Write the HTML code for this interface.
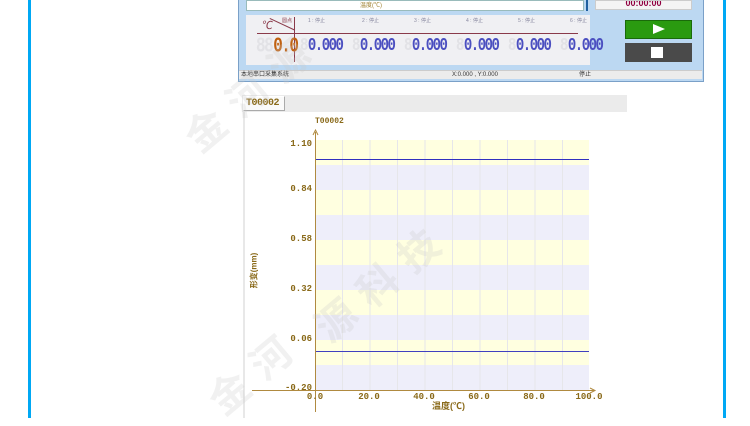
<!DOCTYPE html>
<html><head><meta charset="utf-8"><style>
*{margin:0;padding:0;box-sizing:border-box}
body{width:750px;height:418px;background:#fff;position:relative;overflow:hidden;font-family:"Liberation Sans","Noto Sans CJK SC",sans-serif}
.a{position:absolute}
.lcd{position:absolute;font-family:"Liberation Mono",monospace;font-size:14px;font-weight:bold;color:#4b4fc0;letter-spacing:-1.5px;top:38px;white-space:nowrap;transform:scaleY(1.35);transform-origin:0 50%}
.lcd b{color:#e2e2e6;margin-right:1px}
.hd{position:absolute;top:17px;font-size:5px;color:#8888a0}
.yl{position:absolute;font-family:"Liberation Mono",monospace;font-size:9px;font-weight:bold;color:#8a6a1a;text-align:right;width:40px}
.xl{position:absolute;font-family:"Liberation Mono",monospace;font-size:9px;font-weight:bold;color:#8a6a1a;top:392px;width:40px;text-align:center}
.wm{position:absolute;font-size:40px;color:rgba(200,200,200,0.25);font-weight:bold;transform:rotate(-40deg);white-space:nowrap;letter-spacing:14px}
</style></head><body>
<div class="a" style="left:28px;top:0;width:3px;height:418px;background:#00a8f4"></div>
<div class="a" style="left:723px;top:0;width:3px;height:418px;background:#00a8f4"></div>

<div class="a" style="left:238px;top:0;width:466px;height:82px;background:#bcd8f2;border:1px solid #7aa0c8;border-top:none"></div>
<div class="a" style="left:246px;top:0;width:338px;height:11px;background:#fff;border:1px solid #9bb"></div>
<div class="a" style="left:360px;top:0;font-size:6px;color:#a08030">温度(℃)</div>
<div class="a" style="left:586px;top:0;width:2px;height:11px;background:#2060a0"></div>
<div class="a" style="left:595px;top:0;width:97px;height:10px;background:#f4f4f4;border:1px solid #ccc;font:bold 9px 'Liberation Sans';color:#900040;text-align:center;line-height:4px;overflow:hidden">00:00:00</div>
<div class="a" style="left:246px;top:15px;width:344px;height:50px;background:#f0f0f3"></div>
<div class="a" style="left:257px;top:33px;width:321px;height:1px;background:#8a3a4a"></div>
<div class="a" style="left:294px;top:17px;width:1px;height:45px;background:#8a3a4a"></div>
<div class="a" style="left:262px;top:17px;font-size:11px;color:#8a3a4a;transform:skew(-10deg)">℃</div>
<div class="a" style="left:270px;top:18px;width:27px;height:1px;background:#8a3a4a;transform:rotate(25deg);transform-origin:0 0"></div>
<div class="a" style="left:282px;top:17px;font-size:5px;color:#8a3a4a">圆点</div>
<div class="hd" style="left:308px">1 : 停止</div><div class="hd" style="left:362px">2 : 停止</div><div class="hd" style="left:414px">3 : 停止</div><div class="hd" style="left:466px">4 : 停止</div><div class="hd" style="left:518px">5 : 停止</div><div class="hd" style="left:570px">6 : 停止</div>
<div class="lcd" style="left:256px;color:#c06010;font-size:16px;top:37px"><b>88</b>0.0</div>
<div class="lcd" style="left:300px"><b>8</b>0.000</div>
<div class="lcd" style="left:352px"><b>8</b>0.000</div>
<div class="lcd" style="left:404px"><b>8</b>0.000</div>
<div class="lcd" style="left:456px"><b>8</b>0.000</div>
<div class="lcd" style="left:508px"><b>8</b>0.000</div>
<div class="lcd" style="left:560px"><b>8</b>0.000</div>
<div class="a" style="left:625px;top:20px;width:67px;height:19px;background:#2a9a10;border:1px solid #1a6a0a"></div>
<div class="a" style="left:653px;top:24px;width:0;height:0;border-left:12px solid #fff;border-top:5px solid transparent;border-bottom:5px solid transparent"></div>
<div class="a" style="left:625px;top:43px;width:67px;height:19px;background:#4a4a4a"></div>
<div class="a" style="left:651px;top:47px;width:12px;height:11px;background:#fff"></div>
<div class="a" style="left:239px;top:70px;width:463px;height:9px;background:#ececec;border-top:1px solid #ccc;font-size:6px;color:#333;line-height:8px"><span style="position:absolute;left:2px">本地串口采集系统</span><span style="position:absolute;left:213px">X:0.000 , Y:0.000</span><span style="position:absolute;left:340px">停止</span></div>

<div class="a" style="left:242px;top:95px;width:385px;height:17px;background:#ebebeb"></div>
<div class="a" style="left:243px;top:96px;width:42px;height:15px;background:#fafafa;border:1px solid #aaa;border-top-color:#fff;border-left-color:#fff;font:bold 10px 'Liberation Mono',monospace;color:#8a6a1a;padding-left:2px;line-height:14px;letter-spacing:-0.5px">T00002</div>
<div class="a" style="left:243px;top:112px;width:2px;height:306px;background:#e8e8e8"></div>
<div class="a" style="left:315px;top:117px;font:bold 8px 'Liberation Mono',monospace;color:#8a6a1a">T00002</div>

<svg class="a" style="left:0;top:0" width="750" height="418">
<rect x="315" y="140" width="274" height="250" fill="#ffffe0"/>
<rect x="315" y="165" width="274" height="25" fill="#eeeefa"/>
<rect x="315" y="215" width="274" height="25" fill="#eeeefa"/>
<rect x="315" y="265" width="274" height="25" fill="#eeeefa"/>
<rect x="315" y="315" width="274" height="25" fill="#eeeefa"/>
<rect x="315" y="365" width="274" height="25" fill="#eeeefa"/>
<g stroke="#e6e6ea" stroke-width="1">
<line x1="342.5" y1="140" x2="342.5" y2="390"/><line x1="370" y1="140" x2="370" y2="390"/><line x1="397.5" y1="140" x2="397.5" y2="390"/><line x1="425" y1="140" x2="425" y2="390"/><line x1="452.5" y1="140" x2="452.5" y2="390"/><line x1="480" y1="140" x2="480" y2="390"/><line x1="507.5" y1="140" x2="507.5" y2="390"/><line x1="535" y1="140" x2="535" y2="390"/><line x1="562.5" y1="140" x2="562.5" y2="390"/>
</g>
<line x1="315" y1="159.5" x2="589" y2="159.5" stroke="#3030c0"/>
<line x1="315" y1="351.5" x2="589" y2="351.5" stroke="#4040c0"/>
<line x1="315.5" y1="132" x2="315.5" y2="412" stroke="#b08a40"/>
<path d="M313 135 L315.5 130 L318 135" fill="none" stroke="#b08a40"/>
<line x1="252" y1="390.5" x2="594" y2="390.5" stroke="#b08a40"/>
<path d="M590 388 L595 390.5 L590 393" fill="none" stroke="#b08a40"/>
</svg>
<div class="yl" style="left:272px;top:139px">1.10</div>
<div class="yl" style="left:272px;top:184px">0.84</div>
<div class="yl" style="left:272px;top:234px">0.58</div>
<div class="yl" style="left:272px;top:284px">0.32</div>
<div class="yl" style="left:272px;top:334px">0.06</div>
<div class="yl" style="left:272px;top:383px">-0.20</div>
<div class="xl" style="left:295px">0.0</div>
<div class="xl" style="left:349px">20.0</div>
<div class="xl" style="left:404px">40.0</div>
<div class="xl" style="left:459px">60.0</div>
<div class="xl" style="left:514px">80.0</div>
<div class="xl" style="left:569px">100.0</div>
<div class="a" style="left:432px;top:399px;font-size:9px;font-weight:bold;color:#8a6a1a">温度(℃)</div>
<div class="a" style="left:236px;top:265px;font-size:8px;font-weight:bold;color:#8a6a1a;transform:rotate(-90deg);white-space:nowrap">形变(mm)</div>

<div class="wm" style="left:170px;top:60px">金河源</div>
<div class="wm" style="left:300px;top:250px">源科技</div>
<div class="wm" style="left:200px;top:340px">金河</div>
</body></html>
